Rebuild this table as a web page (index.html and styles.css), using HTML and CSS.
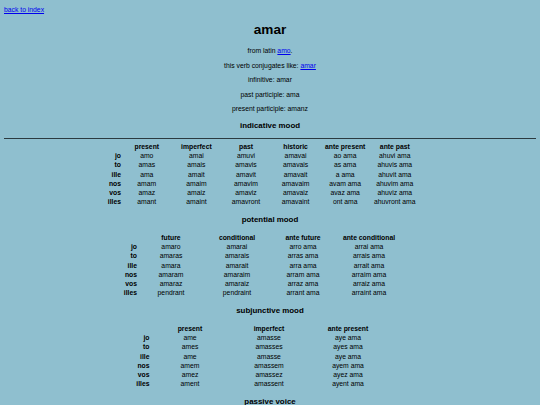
FILE: index.html
```html
<!DOCTYPE html>
<html lang="en">
<head>
<meta charset="utf-8">
<title>amar</title>
<link rel="stylesheet" href="styles.css">
</head>
<body>
<div class="back"><a href="#">back to index</a></div>
<h1 class="title">amar</h1>
<p class="info">from latin <a href="#">amo</a>.</p>
<p class="info">this verb conjugates like: <a href="#">amar</a></p>
<p class="info">infinitive: amar</p>
<p class="info">past participle: ama</p>
<p class="info">present participle: amanz</p>

<h3 class="mood">indicative mood</h3>
<div class="rule"></div>
<table class="conj conj-ind">
<colgroup><col class="c-pro"><col span="6" class="c-data"></colgroup>
<thead><tr><th></th><th>present</th><th>imperfect</th><th>past</th><th>historic</th><th>ante present</th><th>ante past</th></tr></thead>
<tbody>
<tr><th>jo</th><td>amo</td><td>amai</td><td>amuvi</td><td>amavai</td><td>ao ama</td><td>ahuvi ama</td></tr>
<tr><th>to</th><td>amas</td><td>amais</td><td>amavis</td><td>amavais</td><td>as ama</td><td>ahuvis ama</td></tr>
<tr><th>ille</th><td>ama</td><td>amait</td><td>amavit</td><td>amavait</td><td>a ama</td><td>ahuvit ama</td></tr>
<tr><th>nos</th><td>amam</td><td>amaim</td><td>amavim</td><td>amavaim</td><td>avam ama</td><td>ahuvim ama</td></tr>
<tr><th>vos</th><td>amaz</td><td>amaiz</td><td>amaviz</td><td>amavaiz</td><td>avaz ama</td><td>ahuviz ama</td></tr>
<tr><th>illes</th><td>amant</td><td>amaint</td><td>amavront</td><td>amavaint</td><td>ont ama</td><td>ahuvront ama</td></tr>
</tbody>
</table>

<h3 class="mood">potential mood</h3>
<table class="conj conj-pot">
<colgroup><col class="c-pro"><col span="4" class="c-data"></colgroup>
<thead><tr><th></th><th>future</th><th>conditional</th><th>ante future</th><th>ante conditional</th></tr></thead>
<tbody>
<tr><th>jo</th><td>amaro</td><td>amarai</td><td>arro ama</td><td>arrai ama</td></tr>
<tr><th>to</th><td>amaras</td><td>amarais</td><td>arras ama</td><td>arrais ama</td></tr>
<tr><th>ille</th><td>amara</td><td>amarait</td><td>arra ama</td><td>arrait ama</td></tr>
<tr><th>nos</th><td>amaram</td><td>amaraim</td><td>arram ama</td><td>arraim ama</td></tr>
<tr><th>vos</th><td>amaraz</td><td>amaraiz</td><td>arraz ama</td><td>arraiz ama</td></tr>
<tr><th>illes</th><td>pendrant</td><td>pendraint</td><td>arrant ama</td><td>arraint ama</td></tr>
</tbody>
</table>

<h3 class="mood">subjunctive mood</h3>
<table class="conj conj-sub">
<colgroup><col class="c-pro"><col span="3" class="c-data"></colgroup>
<thead><tr><th></th><th>present</th><th>imperfect</th><th>ante present</th></tr></thead>
<tbody>
<tr><th>jo</th><td>ame</td><td>amasse</td><td>aye ama</td></tr>
<tr><th>to</th><td>ames</td><td>amasses</td><td>ayes ama</td></tr>
<tr><th>ille</th><td>ame</td><td>amasse</td><td>aye ama</td></tr>
<tr><th>nos</th><td>amem</td><td>amassem</td><td>ayem ama</td></tr>
<tr><th>vos</th><td>amez</td><td>amassez</td><td>ayez ama</td></tr>
<tr><th>illes</th><td>ament</td><td>amassent</td><td>ayent ama</td></tr>
</tbody>
</table>

<h3 class="mood">passive voice</h3>
</body>
</html>
```

FILE: styles.css
```css
html {
  background: #8fbfcf;
}

body {
  margin: 0 4px;
  font-family: "Liberation Sans", Arial, sans-serif;
  font-size: 6.8px;
  color: #000;
  overflow: hidden;
  height: 405px;
}

a {
  color: #0000ee;
}

.back {
  padding-top: 6px;
  line-height: 8px;
}

.title {
  margin: 8px 0 0;
  font-size: 13.6px;
  line-height: 16px;
  text-align: center;
}

.info {
  margin: 6.5px 0 0;
  line-height: 8px;
  text-align: center;
}

.title + .info {
  margin-top: 9px;
}

.mood {
  margin: 8.2px 0 0;
  font-size: 7.9px;
  line-height: 10px;
  text-align: center;
}

.rule {
  margin-top: 6.5px;
  border-top: 1px solid #2b3a40;
}

.conj {
  border-collapse: collapse;
  table-layout: fixed;
  margin-top: 8.4px;
}

.rule + .conj {
  margin-top: 3.4px;
}

.conj th,
.conj td {
  padding: 0;
  height: 9.2px;
  line-height: 9.2px;
  text-align: center;
  white-space: nowrap;
}

.conj tbody th {
  text-align: right;
  padding-right: 1px;
}

.c-pro {
  width: 16px;
}

.conj-ind {
  width: 313.6px;
  margin-left: 102px;
}

.conj-ind .c-data {
  width: 49.6px;
}

.conj-pot {
  width: 280px;
  margin-left: 118px;
}

.conj-pot .c-data {
  width: 66px;
}

.conj-sub {
  width: 253px;
  margin-left: 130.5px;
}

.conj-sub .c-data {
  width: 79px;
}
```
